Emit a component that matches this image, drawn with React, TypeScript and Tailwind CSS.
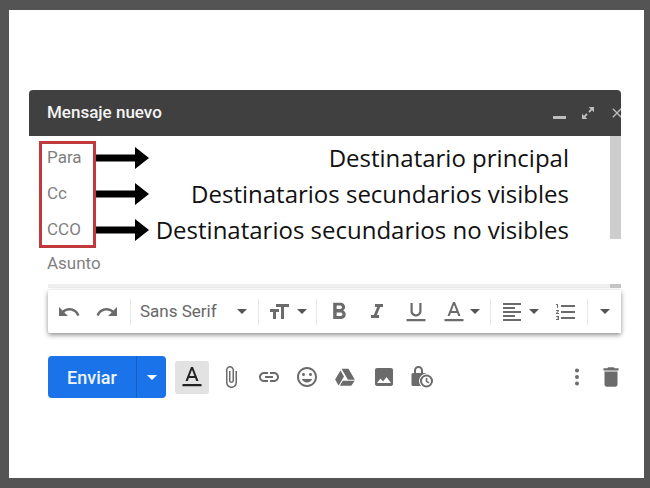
import type { FC, ReactNode } from 'react';
import { MoreVertical } from 'lucide-react';

const Icon: FC<{ d: string; size?: number; className?: string; children?: ReactNode }> = ({ d, size = 24, className = 'text-[#6b6b6b]', children }) => (
  <svg width={size} height={size} viewBox="0 0 24 24" fill="currentColor" className={className}>
    <path d={d} />
    {children}
  </svg>
);

const Caret: FC = () => <span className="block w-0 h-0 border-x-[5px] border-x-transparent border-t-[5px] border-t-[#555]" />;

const Sep: FC = () => <span className="block w-px h-[26px] bg-[#e8e8e8]" />;

const Arrow: FC = () => (
  <svg width="54" height="24" viewBox="0 0 54 24" className="shrink-0">
    <path d="M1 8.5h39V1l14 11-14 11v-7.5H1z" fill="#000" />
  </svg>
);

const RECIPIENTS = [
  { label: 'Para', text: 'Destinatario principal' },
  { label: 'Cc', text: 'Destinatarios secundarios visibles' },
  { label: 'CCO', text: 'Destinatarios secundarios no visibles' },
];

const paths = {
  undo: 'M12.5 8c-2.65 0-5.05.99-6.9 2.6L2 7v9h9l-3.62-3.62c1.39-1.16 3.16-1.88 5.12-1.88 3.54 0 6.55 2.31 7.6 5.5l2.37-.78C21.08 11.03 17.15 8 12.5 8z',
  redo: 'M18.4 10.6C16.55 8.99 14.15 8 11.5 8c-4.65 0-8.58 3.03-9.96 7.22L3.9 16c1.05-3.19 4.05-5.5 7.6-5.5 1.95 0 3.73.72 5.12 1.88L13 16h9V7l-3.6 3.6z',
  size: 'M9 4v3h5v12h3V7h5V4H9zm-6 8h3v7h3v-7h3V9H3v3z',
  bold: 'M15.6 10.79c.97-.67 1.65-1.77 1.65-2.79 0-2.26-1.75-4-4-4H7v14h7.04c2.09 0 3.71-1.7 3.71-3.79 0-1.52-.86-2.82-2.15-3.42zM10 6.5h3c.83 0 1.5.67 1.5 1.5s-.67 1.5-1.5 1.5h-3v-3zm3.5 9H10v-3h3.5c.83 0 1.5.67 1.5 1.5s-.67 1.5-1.5 1.5z',
  italic: 'M10 4v3h2.21l-3.42 8H6v3h8v-3h-2.21l3.42-8H18V4z',
  underline: 'M12 16.5c3.1 0 5.5-2.4 5.5-5.5V3h-2.2v8c0 1.9-1.4 3.3-3.3 3.3S8.7 12.9 8.7 11V3H6.5v8c0 3.1 2.4 5.5 5.5 5.5zM2.5 19h19v2.2h-19z',
  color: 'M11 2L5.5 16h2.25l1.12-3h6.25l1.12 3h2.25L13 2h-2zm-1.38 9L12 4.67 14.38 11H9.62zM2.5 19h19v2.2h-19z',
  align: 'M15 15H3v2h12v-2zm0-8H3v2h12V7zM3 13h18v-2H3v2zm0 8h18v-2H3v2zM3 3v2h18V3H3z',
  list: 'M2 17h2v.5H3v1h1v.5H2v1h3v-4H2v1zm1-9h1V4H2v1h1v3zm-1 3h1.8L2 13.1v.9h3v-1H3.2L5 10.9V10H2v1zm5-6v2h14V5H7zm0 14h14v-2H7v2zm0-6h14v-2H7v2z',
  attach: 'M16.5 6v11.5c0 2.21-1.79 4-4 4s-4-1.79-4-4V5c0-1.38 1.12-2.5 2.5-2.5s2.5 1.12 2.5 2.5v10.5c0 .55-.45 1-1 1s-1-.45-1-1V6H10v9.5c0 1.38 1.12 2.5 2.5 2.5s2.5-1.12 2.5-2.5V5c0-2.21-1.79-4-4-4S7 2.79 7 5v12.5c0 3.04 2.46 5.5 5.5 5.5s5.5-2.46 5.5-5.5V6h-1.5z',
  link: 'M3.9 12c0-1.71 1.39-3.1 3.1-3.1h4V7H7c-2.76 0-5 2.24-5 5s2.24 5 5 5h4v-1.9H7c-1.71 0-3.1-1.39-3.1-3.1zM8 13h8v-2H8v2zm9-6h-4v1.9h4c1.71 0 3.1 1.39 3.1 3.1s-1.39 3.1-3.1 3.1h-4V17h4c2.76 0 5-2.24 5-5s-2.24-5-5-5z',
  emoji: 'M11.99 2C6.47 2 2 6.48 2 12s4.47 10 9.99 10C17.52 22 22 17.52 22 12S17.52 2 11.99 2zM12 20c-4.42 0-8-3.58-8-8s3.58-8 8-8 8 3.58 8 8-3.58 8-8 8zm3.5-9c.83 0 1.5-.67 1.5-1.5S16.33 8 15.5 8 14 8.67 14 9.5s.67 1.5 1.5 1.5zm-7 0c.83 0 1.5-.67 1.5-1.5S9.33 8 8.5 8 7 8.67 7 9.5 7.67 11 8.5 11zm3.5 6.5c2.33 0 4.31-1.46 5.11-3.5H6.89c.8 2.04 2.78 3.5 5.11 3.5z',
  drive: 'M8.2 3h7.6l7 12h-7.6L8.2 3zM7.1 4.9l3.8 6.5L5.1 21.4l-3.9-6.6L7.1 4.9zM9.5 16h13.1l-3.8 5.5H6.4L9.5 16z',
  photo: 'M21 19V5c0-1.1-.9-2-2-2H5c-1.1 0-2 .9-2 2v14c0 1.1.9 2 2 2h14c1.1 0 2-.9 2-2zM8.5 13.5l2.5 3.01L14.5 12l4.5 6H5l3.5-4.5z',
  lock: 'M8.5 1A4.5 4.5 0 0 0 4 5.5V8H3a1.5 1.5 0 0 0-1.5 1.5v10A1.5 1.5 0 0 0 3 21h12a1.5 1.5 0 0 0 1.5-1.5v-10A1.5 1.5 0 0 0 15 8h-2V5.5A4.5 4.5 0 0 0 8.5 1zm0 2A2.5 2.5 0 0 1 11 5.5V8H6V5.5A2.5 2.5 0 0 1 8.5 3z',
  trash: 'M6 19c0 1.1.9 2 2 2h8c1.1 0 2-.9 2-2V7H6v12zM19 4h-3.5l-1-1h-5l-1 1H5v2h14V4z',
  expand: 'M13 3h8v8l-3-3-3.5 3.5-2-2L16 6l-3-3zM11 21H3v-8l3 3 3.5-3.5 2 2L8 18l3 3z',
  close: 'M19 6.41L17.59 5 12 10.59 6.41 5 5 6.41 10.59 12 5 17.59 6.41 19 12 13.41 17.59 19 19 17.59 13.41 12z',
};

export default function App() {
  return (
    <div className="w-[650px] h-[488px] bg-[#545454] pt-[10px] pl-[9px] pr-[6px] pb-[10px] overflow-hidden font-['Roboto',sans-serif]">
      <div className="h-full bg-white pt-[80px] pl-[20px] pr-[23px]">
        <div className="relative">
          {/* Header */}
          <div className="h-[46px] bg-[#404040] rounded-t-[4px] flex items-center pl-[18px] overflow-hidden">
            <span className="text-[17px] font-medium text-[#f5f5f5] flex-1">Mensaje nuevo</span>
            <span className="block w-[13px] h-[3px] bg-[#bdbdbd] mt-[8px] shrink-0" />
            <Icon d={paths.expand} size={16} className="text-[#bdbdbd] ml-[14px] shrink-0" />
            <Icon d={paths.close} size={16} className="text-[#bdbdbd] ml-[13px] mr-[-4px] shrink-0" />
          </div>

          {/* Recipient rows */}
          <div className="flex items-start">
            <div className="flex-1 pt-[4px]">
              {RECIPIENTS.map((r) => (
                <div key={r.label} className="h-9 flex items-center">
                  <span className="w-[66px] pl-[18px] text-[17px] text-[#7f7f7f] shrink-0">{r.label}</span>
                  <Arrow />
                  <span className="flex-1 pr-[41px] text-right text-[24px] leading-none text-[#111] whitespace-nowrap font-['Open_Sans',sans-serif]">
                    {r.text}
                  </span>
                </div>
              ))}
              <div className="h-[31px] flex items-center pl-[18px] text-[17px] text-[#7f7f7f]">Asunto</div>
            </div>
            <div className="w-[11px] h-[103px] bg-[#cdcdcd] shrink-0" />
          </div>

          {/* Formatting toolbar */}
          <div className="ml-[19px] mt-[5px] h-[4px] bg-[#efefef] flex justify-end">
            <span className="block w-[11px] h-full bg-[#c4c4c4]" />
          </div>
          <div className="ml-[19px] mt-[2px] h-[43px] bg-white flex items-center shadow-[0_2px_5px_rgba(0,0,0,0.45)] rounded-l-[2px] overflow-hidden">
            <span className="w-[38px] pl-[9px] shrink-0"><Icon d={paths.undo} /></span>
            <span className="w-[38px] pl-[9px] shrink-0"><Icon d={paths.redo} /></span>
            <span className="ml-[6px]"><Sep /></span>
            <span className="ml-[9px] w-[97px] text-[17px] text-[#666] shrink-0">Sans Serif</span>
            <Caret />
            <span className="ml-[11px]"><Sep /></span>
            <span className="ml-[8px]"><Icon d={paths.size} /></span>
            <span className="ml-[6px]"><Caret /></span>
            <span className="ml-[9px]"><Sep /></span>
            <span className="ml-[8px]"><Icon d={paths.bold} size={28} /></span>
            <span className="ml-[12px]"><Icon d={paths.italic} /></span>
            <span className="ml-[15px]"><Icon d={paths.underline} /></span>
            <span className="ml-[14px]"><Icon d={paths.color} /></span>
            <span className="ml-[4px]"><Caret /></span>
            <span className="ml-[10px]"><Sep /></span>
            <span className="ml-[9px]"><Icon d={paths.align} /></span>
            <span className="ml-[5px]"><Caret /></span>
            <span className="ml-[15px]"><Icon d={paths.list} /></span>
            <span className="ml-[9px]"><Sep /></span>
            <span className="ml-[12px]"><Caret /></span>
          </div>

          {/* Send row */}
          <div className="ml-[19px] mt-[23px] flex items-center">
            <div className="h-[42px] w-[118px] bg-[#1a73e8] rounded-[4px] flex items-center shrink-0">
              <span className="w-[88px] text-center text-[18px] font-medium text-[#eef5ff]">Enviar</span>
              <span className="flex-1 h-full border-l border-[#1560c4] flex items-center justify-center">
                <span className="block w-0 h-0 border-x-[5px] border-x-transparent border-t-[5px] border-t-white" />
              </span>
            </div>
            <span className="ml-[9px] w-[34px] h-[33px] bg-[#e2e2e2] rounded-[3px] flex items-center justify-center shrink-0">
              <Icon d={paths.color} className="text-[#222]" />
            </span>
            <span className="ml-[10px]"><Icon d={paths.attach} /></span>
            <span className="ml-[14px]"><Icon d={paths.link} /></span>
            <span className="ml-[14px]"><Icon d={paths.emoji} /></span>
            <span className="ml-[15px]"><Icon d={paths.drive} size={22} /></span>
            <span className="ml-[16px]"><Icon d={paths.photo} /></span>
            <span className="ml-[14px]">
              <Icon d={paths.lock}>
                <circle cx="16.5" cy="16" r="7.5" fill="#fff" />
                <circle cx="16.5" cy="16" r="5.5" fill="none" stroke="currentColor" strokeWidth="2" />
                <path d="M16.5 13v3.4l2.6 1.5" fill="none" stroke="currentColor" strokeWidth="1.6" />
              </Icon>
            </span>
            <span className="ml-auto"><MoreVertical size={22} className="text-[#6b6b6b]" strokeWidth={2.4} /></span>
            <span className="ml-[10px] mr-[-3px]"><Icon d={paths.trash} size={26} /></span>
          </div>

          {/* Red highlight over the recipient labels */}
          <div className="absolute left-[10px] top-[51px] w-[57px] h-[107px] border-[3px] border-[#c03a3d]" />
        </div>
      </div>
    </div>
  );
}
